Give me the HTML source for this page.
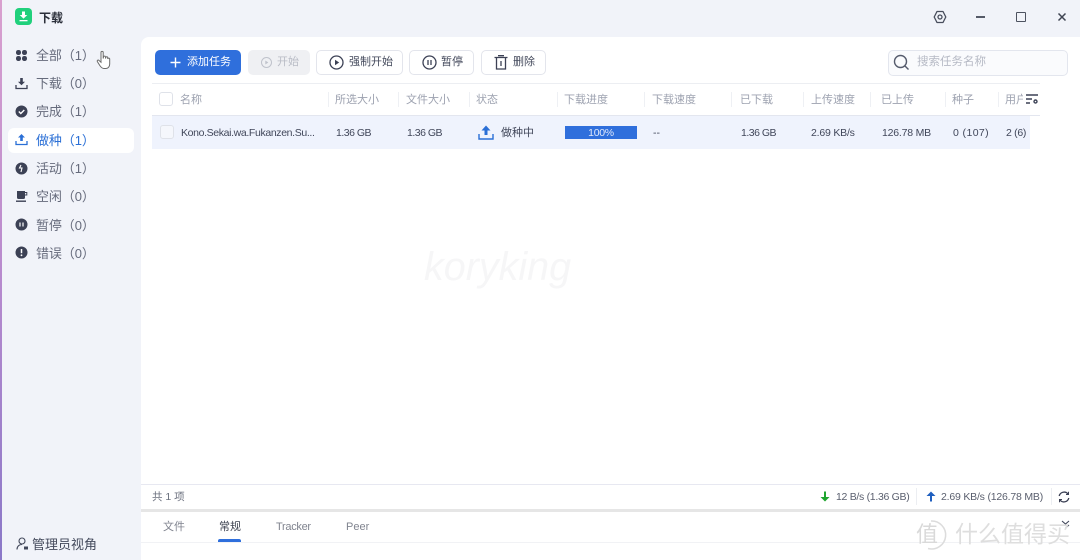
<!DOCTYPE html>
<html lang="zh">
<head>
<meta charset="utf-8">
<style>
html,body{margin:0;padding:0;width:1080px;height:560px;overflow:hidden;background:#f1f3f9}
body{position:relative;font-family:"Liberation Sans","Noto Sans CJK SC",sans-serif;font-size:11px;color:#41475a}
.a{position:absolute;white-space:nowrap}
svg{position:absolute;overflow:visible}
.nav{position:absolute;left:36px;font-size:13px;color:#666b7c;line-height:20px;white-space:nowrap;letter-spacing:-.1px}
.btn{position:absolute;top:50px;height:25px;box-sizing:border-box;border:1px solid #e3e5ec;border-radius:5px;background:#fff;font-size:11px;line-height:23px;color:#444a5c}
.hd{position:absolute;top:92px;font-size:11px;line-height:16px;color:#9da2b0;white-space:nowrap}
.sep{position:absolute;top:92px;width:1px;height:15px;background:#eef0f4}
.cell{position:absolute;top:125px;line-height:16px;font-size:10.5px;color:#41475a;white-space:nowrap}
</style>
</head>
<body>
<!-- window edge -->
<div class="a" style="left:0;top:0;width:1.5px;height:560px;background:linear-gradient(#d9a0cf,#b78ace 50%,#8a78c8)"></div>

<!-- logo -->
<div class="a" style="left:15px;top:8px;width:17px;height:17px;border-radius:4px;background:#20d07c"></div>
<svg style="left:15px;top:8px" width="17" height="17" viewBox="0 0 17 17"><path d="M7 3.500h3v3.500h2.300L8.500 10.600 4.700 7H7z" fill="#fff"/><rect x="4.500" y="12" width="8" height="1.300" fill="#fff"/></svg>
<div class="a" style="left:39px;top:10px;font-size:12px;line-height:16px;font-weight:bold;color:#2b2f3a">下载</div>

<!-- window controls -->
<svg style="left:933px;top:10px" width="14" height="14" viewBox="0 0 14 14" fill="none" stroke="#484d5c" stroke-width="1.300"><path d="M4 1.500h6L12.800 7 10 12.500H4L1.200 7z" stroke-linejoin="round"/><circle cx="7" cy="7" r="2"/></svg>
<div class="a" style="left:976px;top:16px;width:9px;height:1.500px;background:#555a68"></div>
<div class="a" style="left:1016px;top:12px;width:10px;height:10px;box-sizing:border-box;border:1.500px solid #4d5260;border-radius:1px"></div>
<svg style="left:1057px;top:12px" width="10" height="10" viewBox="0 0 10 10" stroke="#3f4452" stroke-width="1.500"><path d="M1.500 1.500l7 7M8.500 1.500l-7 7"/></svg>

<!-- sidebar -->
<div class="a" style="left:8px;top:128px;width:126px;height:25px;background:#fff;border-radius:6px"></div>

<svg style="left:15px;top:49px" width="13" height="13" viewBox="0 0 13 13" fill="#3c4155"><rect x="1" y="1" width="5" height="5" rx="2.300"/><rect x="7" y="1" width="5" height="5" rx="2.300"/><rect x="1" y="7" width="5" height="5" rx="2.300"/><rect x="7" y="7" width="5" height="5" rx="2.300"/></svg>
<div class="nav" style="top:46px">全部（1）</div>

<svg style="left:15px;top:77px" width="13" height="13" viewBox="0 0 13 13"><path d="M5.200 1h2.600v3.800h2.200L6.500 8.300 3 4.800h2.200z" fill="#3c4155"/><path d="M1 8v3.500h11V8" fill="none" stroke="#3c4155" stroke-width="1.300"/></svg>
<div class="nav" style="top:74px">下载（0）</div>

<svg style="left:15px;top:105px" width="13" height="13" viewBox="0 0 13 13"><circle cx="6.500" cy="6.500" r="6" fill="#3c4155"/><path d="M3.800 6.500l2 2 3.500-3.500" fill="none" stroke="#fff" stroke-width="1.400"/></svg>
<div class="nav" style="top:102px">完成（1）</div>

<svg style="left:15px;top:133px" width="13" height="13" viewBox="0 0 13 13"><path d="M5.200 8h2.600V4.500H10L6.500 1 3 4.500h2.200z" fill="#2a6fd6"/><path d="M1 8v3.500h11V8" fill="none" stroke="#2a6fd6" stroke-width="1.300"/></svg>
<div class="nav" style="top:131px;color:#2a6fd6">做种（1）</div>

<svg style="left:15px;top:162px" width="13" height="13" viewBox="0 0 13 13"><circle cx="6.500" cy="6.500" r="6" fill="#3c4155"/><path d="M6 3l-1.500 3H7L6 10" fill="none" stroke="#fff" stroke-width="1.100"/></svg>
<div class="nav" style="top:159px">活动（1）</div>

<svg style="left:15px;top:190px" width="13" height="13" viewBox="0 0 13 13"><path d="M2 1h8v6.500a1.500 1.500 0 0 1-1.500 1.500h-5A1.500 1.500 0 0 1 2 7.500z" fill="#3c4155"/><path d="M10 2.500h1.800v2.500H10" fill="none" stroke="#3c4155"/><rect x="1" y="10.500" width="10" height="1.400" fill="#3c4155"/></svg>
<div class="nav" style="top:187px">空闲（0）</div>

<svg style="left:15px;top:218px" width="13" height="13" viewBox="0 0 13 13"><circle cx="6.500" cy="6.500" r="6" fill="#3c4155"/><path d="M5 4.500v4M8 4.500v4" stroke="#fff" stroke-width="1.200"/></svg>
<div class="nav" style="top:216px">暂停（0）</div>

<svg style="left:15px;top:246px" width="13" height="13" viewBox="0 0 13 13"><circle cx="6.500" cy="6.500" r="6" fill="#3c4155"/><path d="M6.500 3v4.200" stroke="#fff" stroke-width="1.500"/><circle cx="6.500" cy="9.300" r=".9" fill="#fff"/></svg>
<div class="nav" style="top:244px">错误（0）</div>

<!-- cursor -->
<svg style="left:96px;top:50px" width="17" height="20" viewBox="0 0 17 20" fill="#fff" stroke="#6b6b6b" stroke-width="1"><path d="M5 2.500a1 1 0 0 1 2.200 0V8.500l.3-1.500a1 1 0 0 1 2 .2v1.300l.2-.8a1 1 0 0 1 2 .2v1l.2-.4a1 1 0 0 1 1.800.4V14c0 2.500-1.500 4.500-4 4.500H8C6 18.500 4.800 17 3.800 15.500L1.300 11.500c-.5-1 .7-2 1.600-1.100L5 12.300z"/></svg>

<!-- admin -->
<svg style="left:16px;top:537px" width="13" height="14" viewBox="0 0 13 14" fill="none" stroke="#41475a" stroke-width="1.100"><circle cx="6" cy="4" r="3"/><path d="M1 12.500c0-3 2-5 5-5"/><rect x="8" y="9.500" width="4" height="3" fill="#41475a" stroke="none"/></svg>
<div class="a" style="left:32px;top:536px;font-size:13px;line-height:18px;color:#444a5c">管理员视角</div>

<!-- main panel -->
<div class="a" style="left:141px;top:37px;width:939px;height:523px;background:#fff;border-top-left-radius:8px"></div>

<!-- toolbar -->
<div class="a" style="left:155px;top:50px;width:86px;height:25px;background:#2f6fdc;border-radius:5px"></div>
<svg style="left:170px;top:57px" width="11" height="11" viewBox="0 0 11 11" stroke="#fff" stroke-width="1.400"><path d="M5.500 .5v10M.5 5.500h10"/></svg>
<div class="a" style="left:187px;top:54px;font-size:11px;line-height:16px;color:#fff">添加任务</div>

<div class="a" style="left:248px;top:50px;width:62px;height:25px;background:#eff0f3;border-radius:5px"></div>
<svg style="left:261px;top:57px" width="11" height="11" viewBox="0 0 11 11"><circle cx="5.500" cy="5.500" r="5" fill="none" stroke="#bfc2cb"/><path d="M4.300 3.500l3 2-3 2z" fill="#bfc2cb"/></svg>
<div class="a" style="left:277px;top:54px;font-size:11px;line-height:16px;color:#b9bcc6">开始</div>

<div class="btn" style="left:316px;width:87px"></div>
<svg style="left:329px;top:55px" width="15" height="15" viewBox="0 0 15 15"><circle cx="7.500" cy="7.500" r="6.500" fill="none" stroke="#3c4155" stroke-width="1.300"/><path d="M6 4.700l4.200 2.800L6 10.300z" fill="#3c4155"/></svg>
<div class="a" style="left:349px;top:54px;font-size:11px;line-height:16px;color:#444a5c">强制开始</div>

<div class="btn" style="left:409px;width:65px"></div>
<svg style="left:422px;top:55px" width="15" height="15" viewBox="0 0 15 15"><circle cx="7.500" cy="7.500" r="6.500" fill="none" stroke="#3c4155" stroke-width="1.300"/><path d="M6 5v5M9 5v5" stroke="#3c4155" stroke-width="1.300"/></svg>
<div class="a" style="left:441px;top:54px;font-size:11px;line-height:16px;color:#444a5c">暂停</div>

<div class="btn" style="left:481px;width:65px"></div>
<svg style="left:494px;top:55px" width="14" height="15" viewBox="0 0 14 15" fill="none" stroke="#3c4155" stroke-width="1.300"><path d="M.5 2.500h13M4 .7h6M2.500 2.500v11.500h9V2.500M7 6v5"/></svg>
<div class="a" style="left:513px;top:54px;font-size:11px;line-height:16px;color:#444a5c">删除</div>

<!-- search -->
<div class="a" style="left:888px;top:50px;width:180px;height:26px;box-sizing:border-box;background:#fafbfd;border:1px solid #e3e6ee;border-radius:5px"></div>
<svg style="left:893px;top:54px" width="17" height="17" viewBox="0 0 17 17" fill="none" stroke="#555b6c" stroke-width="1.400"><circle cx="7.500" cy="7.500" r="6"/><path d="M12 12l3.500 3.500"/></svg>
<div class="a" style="left:917px;top:54px;font-size:11.500px;line-height:16px;color:#b6bac5">搜索任务名称</div>

<!-- table head -->
<div class="a" style="left:152px;top:83px;width:888px;height:1px;background:#eceef2"></div>
<div class="a" style="left:159px;top:92px;width:14px;height:14px;box-sizing:border-box;border:1px solid #dfe2e9;border-radius:3px;background:#fff"></div>
<div class="hd" style="left:180px">名称</div>
<div class="sep" style="left:328px"></div><div class="hd" style="left:335px">所选大小</div>
<div class="sep" style="left:398px"></div><div class="hd" style="left:406px">文件大小</div>
<div class="sep" style="left:469px"></div><div class="hd" style="left:476px">状态</div>
<div class="sep" style="left:557px"></div><div class="hd" style="left:564px">下载进度</div>
<div class="sep" style="left:644px"></div><div class="hd" style="left:652px">下载速度</div>
<div class="sep" style="left:731px"></div><div class="hd" style="left:740px">已下载</div>
<div class="sep" style="left:803px"></div><div class="hd" style="left:811px">上传速度</div>
<div class="sep" style="left:870px"></div><div class="hd" style="left:881px">已上传</div>
<div class="sep" style="left:945px"></div><div class="hd" style="left:952px">种子</div>
<div class="sep" style="left:998px"></div><div class="hd" style="left:1005px;width:18px;overflow:hidden">用户</div>

<!-- row -->
<div class="a" style="left:152px;top:115px;width:878px;height:34px;background:#eff3fd"></div>
<div class="a" style="left:152px;top:115px;width:888px;height:1px;background:#e3e6ef"></div>
<div class="a" style="left:160px;top:125px;width:14px;height:14px;box-sizing:border-box;border:1px solid #dfe2e9;border-radius:3px;background:#f5f7fc"></div>
<div class="cell" style="left:181px;letter-spacing:-.36px">Kono.Sekai.wa.Fukanzen.Su...</div>
<div class="cell" style="left:336px;letter-spacing:-.5px">1.36 GB</div>
<div class="cell" style="left:407px;letter-spacing:-.5px">1.36 GB</div>
<svg style="left:478px;top:125px" width="16" height="15" viewBox="0 0 16 15"><path d="M6.500 10h3V5.500H12.500L8 .5 3.500 5.500h3z" fill="#2a6fd6"/><path d="M1 9v5h14V9" fill="none" stroke="#2a6fd6" stroke-width="1.400"/></svg>
<div class="cell" style="left:501px;font-size:11px">做种中</div>
<div class="a" style="left:565px;top:126px;width:72px;height:13px;background:#2f6fdc;color:#dfe8fb;font-size:10.500px;line-height:14px;text-align:center;letter-spacing:-.3px">100%</div>
<div class="cell" style="left:653px">--</div>
<div class="cell" style="left:741px;letter-spacing:-.5px">1.36 GB</div>
<div class="cell" style="left:811px;letter-spacing:-.2px">2.69 KB/s</div>
<div class="cell" style="left:882px;letter-spacing:-.2px">126.78 MB</div>
<div class="cell" style="left:953px;letter-spacing:.4px">0 (107)</div>
<div class="cell" style="left:1006px;letter-spacing:-.3px">2 (6)</div>

<!-- column settings -->
<div class="a" style="left:1024px;top:90px;width:17px;height:24px;background:#fff"></div>
<svg style="left:1026px;top:94px" width="14" height="12" viewBox="0 0 14 12"><path d="M0 1h12M0 5h6M0 9h4" stroke="#3c4155" stroke-width="1.400"/><circle cx="9.500" cy="7.500" r="2.200" fill="#3c4155"/><circle cx="9.500" cy="7.500" r=".8" fill="#fff"/></svg>

<!-- watermark -->
<div class="a" style="left:424px;top:244px;font-size:39.500px;line-height:46px;font-style:italic;color:#f6f6f7">koryking</div>

<!-- status bar -->
<div class="a" style="left:141px;top:484px;width:939px;height:1px;background:#e7e8f1"></div>
<div class="a" style="left:152px;top:489px;font-size:10.500px;line-height:16px;color:#6a6f7d">共 1 项</div>
<svg style="left:820px;top:491px" width="10" height="11" viewBox="0 0 10 11"><path d="M4 .5h2V6h3.500L5 10.500.5 6H4z" fill="#1fa52f"/></svg>
<div class="a" style="left:836px;top:489px;font-size:10.500px;line-height:16px;color:#5a5f6e;letter-spacing:-.3px">12 B/s (1.36 GB)</div>
<div class="a" style="left:916px;top:488px;width:1px;height:17px;background:#eceef2"></div>
<svg style="left:926px;top:491px" width="10" height="11" viewBox="0 0 10 11"><path d="M4 10.500h2V5h3.500L5 .5.500 5H4z" fill="#1f5fbf"/></svg>
<div class="a" style="left:941px;top:489px;font-size:10.500px;line-height:16px;color:#5a5f6e;letter-spacing:-.2px">2.69 KB/s (126.78 MB)</div>
<div class="a" style="left:1051px;top:488px;width:1px;height:17px;background:#eceef2"></div>
<svg style="left:1058px;top:491px" width="12" height="12" viewBox="0 0 12 12" fill="none" stroke="#3c4155" stroke-width="1.300"><path d="M1.200 5A5 5 0 0 1 10 3M10.800 7A5 5 0 0 1 2 9"/><path d="M10.500 .8V3.500H8M1.500 11.200V8.500H4" stroke-width="1"/></svg>

<!-- divider + tabs -->
<div class="a" style="left:141px;top:509px;width:939px;height:3px;background:#e6e6e6"></div>
<div class="a" style="left:163px;top:519px;font-size:11px;line-height:16px;color:#80848f">文件</div>
<div class="a" style="left:219px;top:519px;font-size:11px;line-height:16px;color:#3d4250">常规</div>
<div class="a" style="left:276px;top:519px;font-size:11px;line-height:16px;color:#80848f;letter-spacing:-.3px">Tracker</div>
<div class="a" style="left:346px;top:519px;font-size:11px;line-height:16px;color:#80848f">Peer</div>
<div class="a" style="left:218px;top:539px;width:23px;height:3px;background:#2f6fdc;border-radius:2px 2px 0 0"></div>
<div class="a" style="left:141px;top:542px;width:939px;height:1px;background:#f1f2f5"></div>
<svg style="left:1061px;top:520px" width="9" height="10" viewBox="0 0 9 10" fill="none" stroke="#41475a" stroke-width="1.100"><path d="M1 1l3.500 3L8 1M8 5L4.500 8"/></svg>

<!-- site watermark -->
<svg style="left:914px;top:519px" width="32" height="32" viewBox="0 0 32 32" fill="none" stroke="#dcdcdc" stroke-width="1.500"><path d="M17 2a14 14 0 1 1-3 27.500"/></svg>
<div class="a" style="left:916px;top:522px;font-size:22px;line-height:26px;color:#d9d9d9">值</div>
<div class="a" style="left:955px;top:519px;font-size:23px;line-height:30px;color:#dedede">什么值得买</div>
</body>
</html>
